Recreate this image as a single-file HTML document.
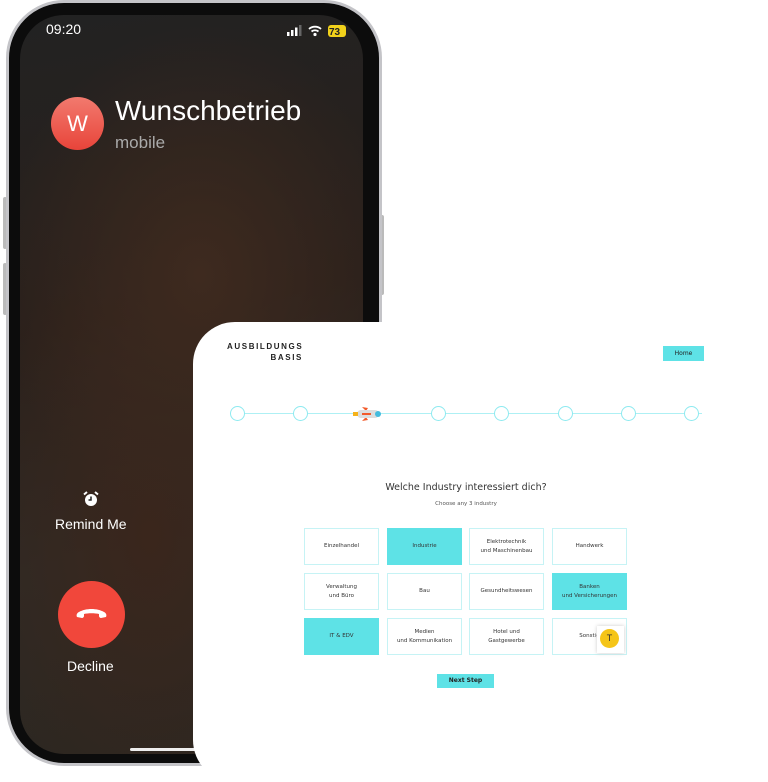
<!DOCTYPE html><html><head><style>
body{margin:0;width:768px;height:768px;background:#fff;position:relative;overflow:hidden;font-family:"Liberation Sans",sans-serif}
.phone{position:absolute;left:6px;top:0;width:376px;height:766px;border-radius:58px;background:#0c0c0c;border:3px solid #c4c4c8;box-sizing:border-box}
.btn{position:absolute;background:#bbb;width:4px;border-radius:2px}
.screen{position:absolute;left:20px;top:15px;width:343px;height:739px;border-radius:44px;overflow:hidden;
background:radial-gradient(ellipse 200px 250px at 180px 260px,#3e2a1f,transparent),radial-gradient(ellipse 180px 300px at 130px 520px,#3a261c,transparent),linear-gradient(170deg,#222 0%,#2a201b 40%,#2f2a25 70%,#2b2620 100%)}
.w{color:#fff;position:absolute}
.card{position:absolute;left:193px;top:322px;width:600px;height:460px;background:#fff;border-radius:42px 0 0 42px}
.box{position:absolute;width:73px;height:35px;border:1px solid #c6f3f5;font-family:"DejaVu Sans",sans-serif;font-size:5.5px;color:#333;display:flex;align-items:center;justify-content:center;text-align:center;line-height:9px}
.on{background:#5ee2e6;border-color:#5ee2e6}
.c{position:absolute;top:406px;width:13px;height:13px;border:1.6px solid #8eeaf0;border-radius:50%;background:#fff}
</style></head><body>
<div class="btn" style="left:3px;top:197px;height:52px"></div>
<div class="btn" style="left:3px;top:263px;height:52px"></div>
<div class="btn" style="left:380px;top:215px;height:80px"></div>
<div class="phone"></div>
<div class="screen">
<div class="w" style="left:26px;top:6px;font-size:14px">09:20</div>
<svg style="position:absolute;left:267px;top:9px" width="62" height="14" viewBox="0 0 62 14">
<rect x="0" y="8" width="2.5" height="4" fill="#fff"/><rect x="4" y="6" width="2.5" height="6" fill="#fff"/><rect x="8" y="3.5" width="2.5" height="8.5" fill="#fff"/><rect x="12" y="1" width="2.5" height="11" fill="#666"/>
<path d="M22 5a9 9 0 0 1 12 0M24.5 7.5a5.5 5.5 0 0 1 7 0" stroke="#fff" stroke-width="1.8" fill="none"/><circle cx="28" cy="10.5" r="1.6" fill="#fff"/>
<rect x="41" y="1" width="18" height="12" rx="3" fill="#f2d21b"/><text x="42" y="11" font-size="10" font-weight="bold" fill="#222" font-family="Liberation Sans">73</text>
</svg>
<div style="position:absolute;left:31px;top:82px;width:53px;height:53px;border-radius:50%;background:linear-gradient(#f27a6e,#e8443a);color:#fff;font-size:22px;text-align:center;line-height:53px">W</div>
<div class="w" style="left:95px;top:80px;font-size:28px">Wunschbetrieb</div>
<div class="w" style="left:95px;top:118px;font-size:17px;color:#aaa">mobile</div>
<svg style="position:absolute;left:62px;top:475px" width="18" height="18" viewBox="0 0 18 18"><circle cx="9" cy="10" r="6" fill="#fff"/><path d="M9 6.5V10h-2.5" stroke="#222" stroke-width="1.5" fill="none"/><path d="M2 4.5l3-2.5M16 4.5l-3-2.5" stroke="#fff" stroke-width="2"/></svg>
<div class="w" style="left:35px;top:501px;font-size:14px">Remind Me</div>
<div style="position:absolute;left:38px;top:566px;width:67px;height:67px;border-radius:50%;background:#f1473b"></div>
<svg style="position:absolute;left:55px;top:591px" width="33" height="14" viewBox="0 0 33 14"><path d="M2 11c-1-2 0-4 2-5 7-4 18-4 25 0 2 1 3 3 2 5l-5 1c-1 0-2-1-2-2v-2c-4-1-11-1-15 0v2c0 1-1 2-2 2z" fill="#fff"/></svg>
<div class="w" style="left:47px;top:643px;font-size:14px">Decline</div>
<div style="position:absolute;left:110px;top:733px;width:120px;height:3px;background:#eee;border-radius:2px"></div>
</div>
<div class="card"></div>
<div style="position:absolute;left:227px;top:341px;font-size:8px;font-weight:bold;letter-spacing:1.6px;color:#222;line-height:11px;text-align:right;width:76px">AUSBILDUNGS<br>BASIS</div>
<div style="position:absolute;left:663px;top:346px;width:41px;height:15px;background:#5ee2e6;font-size:6px;font-family:'DejaVu Sans',sans-serif;text-align:center;line-height:15px;color:#222">Home</div>
<div style="position:absolute;left:238px;top:413px;width:464px;height:1px;background:#aef0f4"></div>
<div class="c" style="left:230px"></div><div class="c" style="left:293px"></div>
<div class="c" style="left:431px"></div><div class="c" style="left:494px"></div><div class="c" style="left:558px"></div><div class="c" style="left:621px"></div><div class="c" style="left:684px"></div>
<svg style="position:absolute;left:350px;top:402px" width="34" height="24" viewBox="0 0 34 24">
<path d="M12 5l6 1-2 3zM12 19l6-1-2-3z" fill="#f25a2a"/>
<rect x="7" y="8" width="22" height="8" rx="4" fill="#ddd"/>
<rect x="3" y="10" width="5" height="4" fill="#f5b21b"/>
<rect x="12" y="11" width="9" height="2" fill="#f25a2a"/>
<circle cx="28" cy="12" r="3" fill="#4bd"/>
</svg>
<div style="position:absolute;left:300px;top:482px;width:332px;text-align:center;font-family:'DejaVu Sans',sans-serif;font-size:9.5px;color:#333">Welche Industry interessiert dich?</div>
<div style="position:absolute;left:300px;top:501px;width:332px;text-align:center;font-family:'DejaVu Sans',sans-serif;font-size:5.5px;color:#555">Choose any 3 industry</div>
<div class="box" style="left:304px;top:528px">Einzelhandel</div>
<div class="box on" style="left:387px;top:528px">Industrie</div>
<div class="box" style="left:469px;top:528px">Elektrotechnik<br>und Maschinenbau</div>
<div class="box" style="left:552px;top:528px">Handwerk</div>
<div class="box" style="left:304px;top:573px">Verwaltung<br>und Büro</div>
<div class="box" style="left:387px;top:573px">Bau</div>
<div class="box" style="left:469px;top:573px">Gesundheitswesen</div>
<div class="box on" style="left:552px;top:573px">Banken<br>und Versicherungen</div>
<div class="box on" style="left:304px;top:618px">IT &amp; EDV</div>
<div class="box" style="left:387px;top:618px">Medien<br>und Kommunikation</div>
<div class="box" style="left:469px;top:618px">Hotel und<br>Gastgewerbe</div>
<div class="box" style="left:552px;top:618px">Sonstig</div>
<div style="position:absolute;left:597px;top:626px;width:27px;height:27px;background:#fff;box-shadow:0 0 4px #ccc"></div>
<div style="position:absolute;left:600px;top:629px;width:19px;height:19px;border-radius:50%;background:#f5c518;font-size:9px;text-align:center;line-height:19px;color:#333">T</div>
<div style="position:absolute;left:437px;top:674px;width:57px;height:14px;background:#5ee2e6;font-family:'DejaVu Sans',sans-serif;font-size:6px;font-weight:bold;text-align:center;line-height:14px;color:#222">Next Step</div>
</body></html>
